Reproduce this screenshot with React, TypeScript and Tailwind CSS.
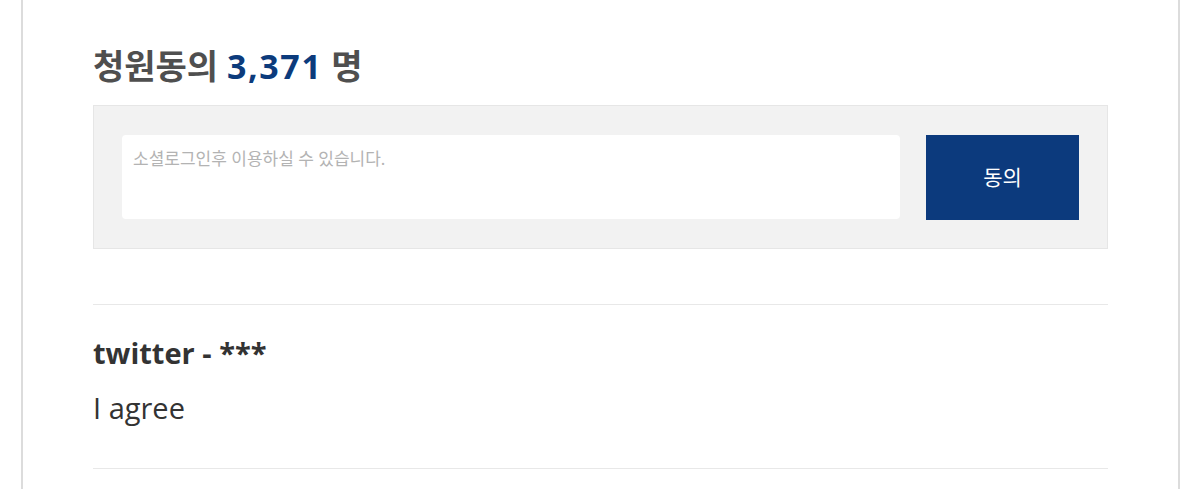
export default function App() {
  return (
    <div className="min-h-screen bg-white">
      <div
        className="ml-[21px] mr-[20px] h-[489px] border-x-2 border-[#dcdcdc] px-[70px] pt-[42px]"
        style={{ fontFamily: '"Noto Sans", "Noto Sans CJK KR", sans-serif' }}
      >
        {/* 동의 수 */}
        <h2 className="text-[34px] font-bold leading-[48px] text-[#4f4f4f]">
          청원동의 <span className="tracking-[1.6px] text-[#0c3b7c]">3,371</span> 명
        </h2>

        {/* 입력 영역 */}
        <div className="mt-[15px] flex h-[144px] gap-[26px] border border-[#e6e6e6] bg-[#f2f2f2] pl-[28px] pr-[28px] pt-[29px]">
          <div className="h-[84px] flex-1 rounded-[4px] bg-white px-[11px] pt-[12px] text-[17px] leading-[24px] text-[#b3b3b3]">
            소셜로그인후 이용하실 수 있습니다.
          </div>
          <button className="h-[85px] w-[153px] bg-[#0c3a7d] text-[21px] text-white">
            동의
          </button>
        </div>

        {/* 댓글 */}
        <div className="mt-[55px] border-y border-[#e8e8e8] pb-[40px] pt-[28px]">
          <div
            className="text-[29px] font-bold leading-[40px] text-[#333]"
            style={{ fontFamily: '"Open Sans", sans-serif' }}
          >
            twitter - ***
          </div>
          <div
            className="mt-[15px] text-[29px] leading-[40px] text-[#333]"
            style={{ fontFamily: '"Open Sans", sans-serif' }}
          >
            I agree
          </div>
        </div>
      </div>
    </div>
  );
}
